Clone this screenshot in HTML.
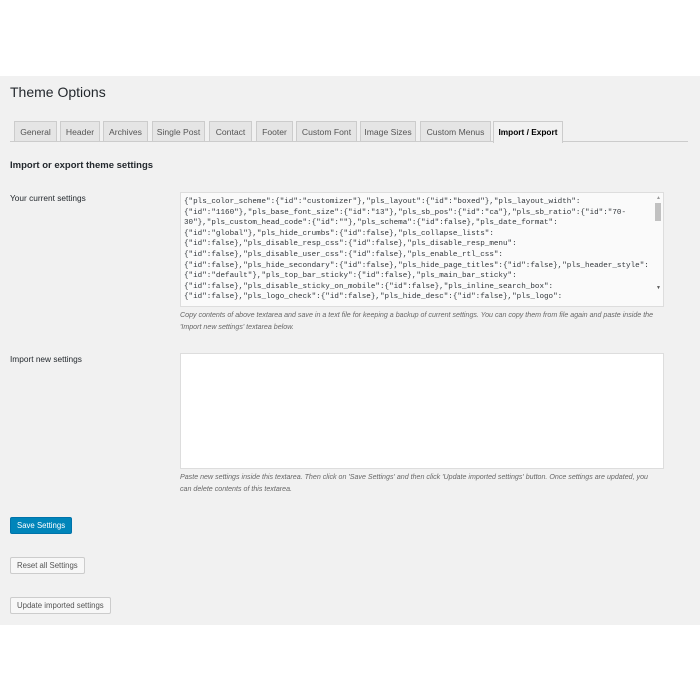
<!DOCTYPE html>
<html><head><style>
body{margin:0;width:700px;height:700px;background:#fff;font-family:"Liberation Sans",sans-serif;position:relative;overflow:hidden}
.g{position:absolute;left:0;top:76px;width:700px;height:549px;background:#f1f1f1}
.a{position:absolute}
h1{position:absolute;left:10px;top:84px;margin:0;font-size:14px;font-weight:normal;color:#23282d}
.tab{position:absolute;top:121px;height:20px;background:#e5e5e5;border:1px solid #ccc;border-bottom:none;font-size:8.6px;color:#555;line-height:20px;text-align:center;box-sizing:border-box}
.tab.on{background:#f1f1f1;color:#000;height:22px;font-weight:bold;font-size:8.3px}
.line{position:absolute;left:10px;top:141px;width:678px;height:1px;background:#ccc}
.lbl{position:absolute;left:10px;font-size:8.3px;color:#23282d}
.ta{position:absolute;left:180px;width:484px;background:#fff;border:1px solid #ddd;box-sizing:border-box}
pre{margin:0;font-family:"Liberation Mono",monospace;font-size:7.6px;line-height:10.6px;color:#32373c;padding:4px 3px;white-space:pre}
.d{position:absolute;left:180px;font-size:7.1px;font-style:italic;color:#666;line-height:11.5px;width:500px}
.btn{position:absolute;left:10px;height:17px;border:1px solid #ccc;background:#f7f7f7;font-size:7.8px;color:#555;line-height:16px;padding:0 6px;box-sizing:border-box;border-radius:2px}
</style></head><body>
<div class="g"></div>
<h1>Theme Options</h1>
<div class="tab" style="left:14px;width:43px">General</div>
<div class="tab" style="left:60px;width:40px">Header</div>
<div class="tab" style="left:103px;width:45px">Archives</div>
<div class="tab" style="left:152px;width:53px">Single Post</div>
<div class="tab" style="left:209px;width:43px">Contact</div>
<div class="tab" style="left:256px;width:37px">Footer</div>
<div class="tab" style="left:296px;width:61px">Custom Font</div>
<div class="tab" style="left:360px;width:56px">Image Sizes</div>
<div class="tab" style="left:420px;width:71px">Custom Menus</div>
<div class="line"></div>
<div class="tab on" style="left:493px;width:70px">Import / Export</div>
<div class="a" style="left:10px;top:160px;font-size:9.5px;font-weight:bold;color:#23282d">Import or export theme settings</div>
<div class="lbl" style="top:193px">Your current settings</div>
<div class="ta" style="top:192px;height:115px;background:#fafafa"><pre>{"pls_color_scheme":{"id":"customizer"},"pls_layout":{"id":"boxed"},"pls_layout_width":
{"id":"1160"},"pls_base_font_size":{"id":"13"},"pls_sb_pos":{"id":"ca"},"pls_sb_ratio":{"id":"70-
30"},"pls_custom_head_code":{"id":""},"pls_schema":{"id":false},"pls_date_format":
{"id":"global"},"pls_hide_crumbs":{"id":false},"pls_collapse_lists":
{"id":false},"pls_disable_resp_css":{"id":false},"pls_disable_resp_menu":
{"id":false},"pls_disable_user_css":{"id":false},"pls_enable_rtl_css":
{"id":false},"pls_hide_secondary":{"id":false},"pls_hide_page_titles":{"id":false},"pls_header_style":
{"id":"default"},"pls_top_bar_sticky":{"id":false},"pls_main_bar_sticky":
{"id":false},"pls_disable_sticky_on_mobile":{"id":false},"pls_inline_search_box":
{"id":false},"pls_logo_check":{"id":false},"pls_hide_desc":{"id":false},"pls_logo":</pre>
<div class="a" style="right:2px;top:10px;width:6px;height:18px;background:#c1c1c1"></div>
<div class="a" style="right:2px;top:2px;font-size:5px;color:#999">▲</div>
<div class="a" style="right:2px;top:92px;font-size:5px;color:#555">▼</div>
</div>
<div class="d" style="top:310px">Copy contents of above textarea and save in a text file for keeping a backup of current settings. You can copy them from file again and paste inside the<br>'Import new settings' textarea below.</div>
<div class="lbl" style="top:354px">Import new settings</div>
<div class="ta" style="top:353px;height:116px"></div>
<div class="d" style="top:472px">Paste new settings inside this textarea. Then click on 'Save Settings' and then click 'Update imported settings' button. Once settings are updated, you<br>can delete contents of this textarea.</div>
<div class="btn" style="top:517px;background:#0085ba;border-color:#0073aa;color:#fff">Save Settings</div>
<div class="btn" style="top:557px">Reset all Settings</div>
<div class="btn" style="top:597px">Update imported settings</div>
</body></html>
